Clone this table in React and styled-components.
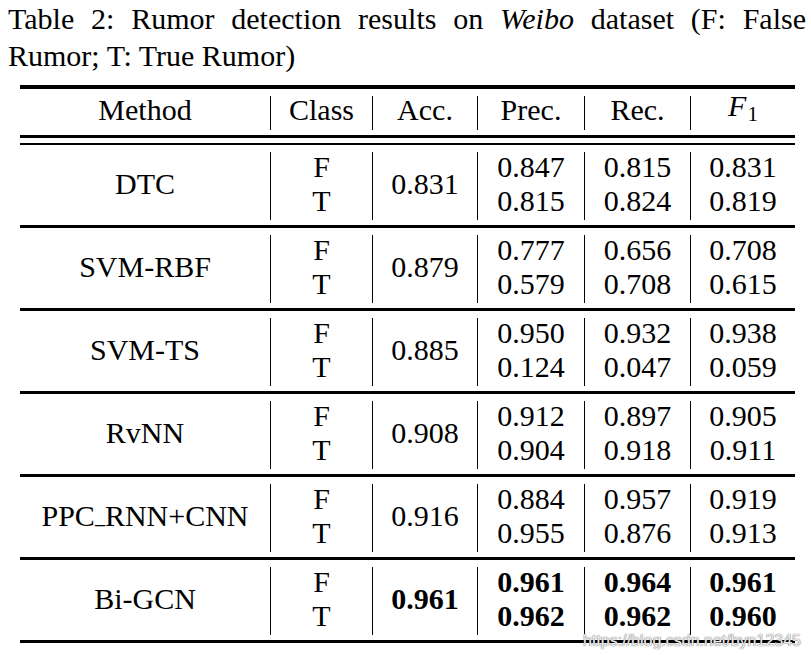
import styled, { createGlobalStyle } from 'styled-components';

const rows = [
	{ method: 'DTC', acc: '0.831', prec: ['0.847', '0.815'], rec: ['0.815', '0.824'], f1: ['0.831', '0.819'] },
	{ method: 'SVM-RBF', acc: '0.879', prec: ['0.777', '0.579'], rec: ['0.656', '0.708'], f1: ['0.708', '0.615'] },
	{ method: 'SVM-TS', acc: '0.885', prec: ['0.950', '0.124'], rec: ['0.932', '0.047'], f1: ['0.938', '0.059'] },
	{ method: 'RvNN', acc: '0.908', prec: ['0.912', '0.904'], rec: ['0.897', '0.918'], f1: ['0.905', '0.911'] },
	{ method: 'PPC_RNN+CNN', acc: '0.916', prec: ['0.884', '0.955'], rec: ['0.957', '0.876'], f1: ['0.919', '0.913'] },
	{ method: 'Bi-GCN', acc: '0.961', prec: ['0.961', '0.962'], rec: ['0.964', '0.962'], f1: ['0.961', '0.960'], best: true },
];

const renderMethod = (name) => {
	if (!name.includes('_')) return <span>{name}</span>;
	const [a, b] = name.split('_');
	return (
		<span>
			{a}
			<Underscore>_</Underscore>
			{b}
		</span>
	);
};

const App = () => {
	return (
		<>
			<GlobalStyle />
			<Page>
				<Caption>
					<CaptionLine $justify>
						Table 2: Rumor detection results on <em>Weibo</em> dataset (F: False
					</CaptionLine>
					<CaptionLine>Rumor; T: True Rumor)</CaptionLine>
				</Caption>

				<TableWrapper>
					<Rule $h={4} />
					<Row>
						<Cell $h={34} $shift={6}>Method</Cell>
						<Cell $h={34} $shift={6} $sep>Class</Cell>
						<Cell $h={34} $shift={6} $sep>Acc.</Cell>
						<Cell $h={34} $shift={6} $sep>Prec.</Cell>
						<Cell $h={34} $shift={6} $sep>Rec.</Cell>
						<Cell $h={34} $shift={6} $sep>
							<span>
								<MathF>F</MathF>
								<Sub>1</Sub>
							</span>
						</Cell>
					</Row>
					<Rule $h={3} />
					<Rule $h={2} $gap={5} />

					{rows.map((r) => (
						<div key={r.method}>
							<Row>
								<Cell $h={68} $shift={4}>{renderMethod(r.method)}</Cell>
								<Cell $h={68} $shift={4} $sep>
									<span>F</span>
									<span>T</span>
								</Cell>
								<Cell $h={68} $shift={4} $sep $bold={r.best}>{r.acc}</Cell>
								{[r.prec, r.rec, r.f1].map((pair, i) => (
									<Cell key={i} $h={68} $shift={4} $sep $bold={r.best}>
										<span>{pair[0]}</span>
										<span>{pair[1]}</span>
									</Cell>
								))}
							</Row>
							<Rule $h={3} />
						</div>
					))}

					<Watermark>https://blog.csdn.net/byn12345</Watermark>
				</TableWrapper>
			</Page>
		</>
	);
};

const GlobalStyle = createGlobalStyle`
	html, body {
		margin: 0;
		padding: 0;
		background: #ffffff;
	}
	body {
		font-family: 'Liberation Serif', 'Times New Roman', serif;
		color: #000;
	}
`;

const Page = styled.div`
	width: 811px;
	height: 655px;
	overflow: hidden;
`;

const Caption = styled.div`
	padding-left: 8px;
	width: 798px;
	font-size: 30px;
	line-height: 37px;
	white-space: nowrap;
	em {
		font-style: italic;
	}
`;

const CaptionLine = styled.div`
	text-align: ${(p) => (p.$justify ? 'justify' : 'left')};
	text-align-last: ${(p) => (p.$justify ? 'justify' : 'auto')};
	white-space: ${(p) => (p.$justify ? 'normal' : 'nowrap')};
`;

const TableWrapper = styled.div`
	position: relative;
	width: 775px;
	margin: 11px 0 0 20px;
`;

const Rule = styled.div`
	height: ${(p) => p.$h}px;
	margin-top: ${(p) => p.$gap || 0}px;
	background: #000;
`;

const Row = styled.div`
	display: grid;
	grid-template-columns: 250px 102px 105px 107px 106px 105px;
	padding: 7px 0 5px;
`;

const Cell = styled.div`
	box-sizing: border-box;
	height: ${(p) => p.$h}px;
	padding-bottom: ${(p) => p.$shift || 0}px;
	display: flex;
	flex-direction: column;
	justify-content: center;
	align-items: center;
	border-left: ${(p) => (p.$sep ? '1px solid #000' : 'none')};
	font-size: 30px;
	line-height: 34px;
	font-weight: ${(p) => (p.$bold ? 700 : 400)};
	white-space: nowrap;
`;

const Underscore = styled.span`
	font-size: 20px;
	vertical-align: 3px;
`;

const MathF = styled.span`
	font-style: italic;
`;

const Sub = styled.span`
	font-size: 21px;
	vertical-align: -5px;
	margin-left: 1px;
`;

const Watermark = styled.div`
	position: absolute;
	right: -6px;
	bottom: -8px;
	font-family: 'Liberation Sans', Arial, sans-serif;
	font-size: 16px;
	line-height: 20px;
	color: rgba(250, 250, 250, 0.92);
	text-shadow: 0 0 1px rgba(90, 90, 90, 0.9), 0 0 1px rgba(120, 120, 120, 0.8);
	white-space: nowrap;
`;

export default App;
